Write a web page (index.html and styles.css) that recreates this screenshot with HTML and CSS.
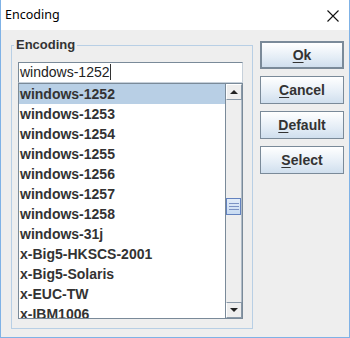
FILE: index.html
```html
<!DOCTYPE html>
<html>
 <head>
 	<title>Encoding</title>
 	<link rel="stylesheet" href="styles.css">
 </head>
 <body>
 	<div class="window">
 		<div class="titlebar">
 			<span class="title">Encoding</span>
 			<svg class="close" width="12" height="12" viewBox="0 0 12 12">
 				<path d="M0.5 0.5 L11.5 11.5 M11.5 0.5 L0.5 11.5" stroke="#111" stroke-width="1.1" fill="none"/>
 			</svg>
 		</div>
 		<div class="content">
 			<div class="group">
 				<span class="grouplabel">Encoding</span>
 				<div class="field">windows-1252<span class="caret"></span></div>
 				<div class="list">
 					<div class="rows">
 						<div class="row selected">windows-1252</div>
 						<div class="row">windows-1253</div>
 						<div class="row">windows-1254</div>
 						<div class="row">windows-1255</div>
 						<div class="row">windows-1256</div>
 						<div class="row">windows-1257</div>
 						<div class="row">windows-1258</div>
 						<div class="row">windows-31j</div>
 						<div class="row">x-Big5-HKSCS-2001</div>
 						<div class="row">x-Big5-Solaris</div>
 						<div class="row">x-EUC-TW</div>
 						<div class="row">x-IBM1006</div>
 					</div>
 					<div class="scrollbar">
 						<div class="arrow"><span class="up"></span></div>
 						<div class="track">
 							<div class="thumb"><i></i><i></i><i></i></div>
 						</div>
 						<div class="arrow"><span class="down"></span></div>
 					</div>
 				</div>
 			</div>
 			<div class="buttons">
 				<div class="btn default"><u>O</u>k</div>
 				<div class="btn"><u>C</u>ancel</div>
 				<div class="btn"><u>D</u>efault</div>
 				<div class="btn"><u>S</u>elect</div>
 			</div>
 		</div>
 	</div>
 </body>
</html>
```

FILE: styles.css
```css
	body {
		margin: 0;
		background: #eeeeee;
		overflow: hidden;
	}
	.window {
		width: 350px;
		height: 338px;
		box-sizing: border-box;
		border: 1px solid #7fb2e6;
		border-top: none;
		background: #eeeeee;
		display: flex;
		flex-direction: column;
	}
	.titlebar {
		height: 30px;
		background: #fff;
		display: flex;
		align-items: center;
		justify-content: space-between;
		padding: 0 10px 0 4px;
		flex-shrink: 0;
	}
	.title {
		font-family: 'Noto Sans', sans-serif;
		font-size: 12.5px;
		color: #000;
		margin-top: -1px;
	}
	.close {
		display: block;
		margin-top: 1px;
	}
	.content {
		display: flex;
		align-items: flex-start;
		padding-left: 10px;
	}
	.group {
		position: relative;
		width: 242px;
		height: 284px;
		box-sizing: border-box;
		margin-top: 15px;
		border: 1px solid #b8cfe5;
		padding: 16px 9px 0 6px;
		font-family: 'Liberation Sans', Arial, sans-serif;
	}
	.grouplabel {
		position: absolute;
		top: -9px;
		left: 2px;
		padding: 0 2px;
		background: #eeeeee;
		font-size: 13px;
		font-weight: bold;
		color: #333;
	}
	.field {
		height: 21px;
		box-sizing: border-box;
		border: 1px solid #7a8a99;
		border-right-color: #c6d0da;
		border-bottom-color: #c6d0da;
		background: #fff;
		font-size: 14px;
		color: #222;
		padding: 1px 0 0 1px;
		line-height: 17px;
	}
	.caret {
		display: inline-block;
		width: 1px;
		height: 16px;
		background: #333;
		vertical-align: -3px;
	}
	.list {
		height: 236px;
		box-sizing: border-box;
		border: 1px solid #7a8a99;
		background: #fff;
		display: flex;
		overflow: hidden;
	}
	.rows {
		flex: 1;
		overflow: hidden;
	}
	.row {
		height: 20px;
		line-height: 21px;
		padding-left: 1px;
		font-size: 14px;
		font-weight: bold;
		color: #333;
		white-space: nowrap;
	}
	.row.selected {
		background: #b8cfe5;
	}
	.scrollbar {
		width: 16px;
		border-left: 1px solid #7a8a99;
		background: #eeeeee;
		display: flex;
		flex-direction: column;
	}
	.arrow {
		height: 16px;
		box-sizing: border-box;
		border: 1px solid #fff;
		border-bottom-color: #8a99a8;
		border-right-color: #8a99a8;
		background: #eeeeee;
		display: flex;
		align-items: center;
		justify-content: center;
	}
	.arrow:last-child {
		border-top: 1px solid #8a99a8;
	}
	.up {
		width: 0;
		height: 0;
		border-left: 4px solid transparent;
		border-right: 4px solid transparent;
		border-bottom: 4px solid #222;
	}
	.down {
		width: 0;
		height: 0;
		border-left: 4px solid transparent;
		border-right: 4px solid transparent;
		border-top: 4px solid #222;
	}
	.track {
		flex: 1;
		border-right: 1px solid #b0bcc8;
		padding-top: 98px;
	}
	.thumb {
		height: 17px;
		box-sizing: border-box;
		border: 1px solid #6382bf;
		background: linear-gradient(#e2ecf8, #c8dbf2);
		display: flex;
		flex-direction: column;
		justify-content: center;
		align-items: center;
		gap: 2px;
	}
	.thumb i {
		display: block;
		width: 10px;
		height: 1px;
		background: #7c93c4;
	}
	.buttons {
		margin-top: 11px;
		margin-left: 7px;
		display: flex;
		flex-direction: column;
		gap: 7px;
	}
	.btn {
		width: 84px;
		height: 28px;
		box-sizing: border-box;
		border: 1px solid #7a8a99;
		background: linear-gradient(#ffffff, #e4edf6 60%, #d0dfee);
		font-family: 'Liberation Sans', Arial, sans-serif;
		font-size: 14px;
		font-weight: bold;
		color: #333;
		display: flex;
		align-items: center;
		justify-content: center;
	}
	.btn.default {
		border: 2px solid #7a8a99;
	}
	.btn u {
		text-decoration-thickness: 1px;
		text-underline-offset: 2px;
	}
```
